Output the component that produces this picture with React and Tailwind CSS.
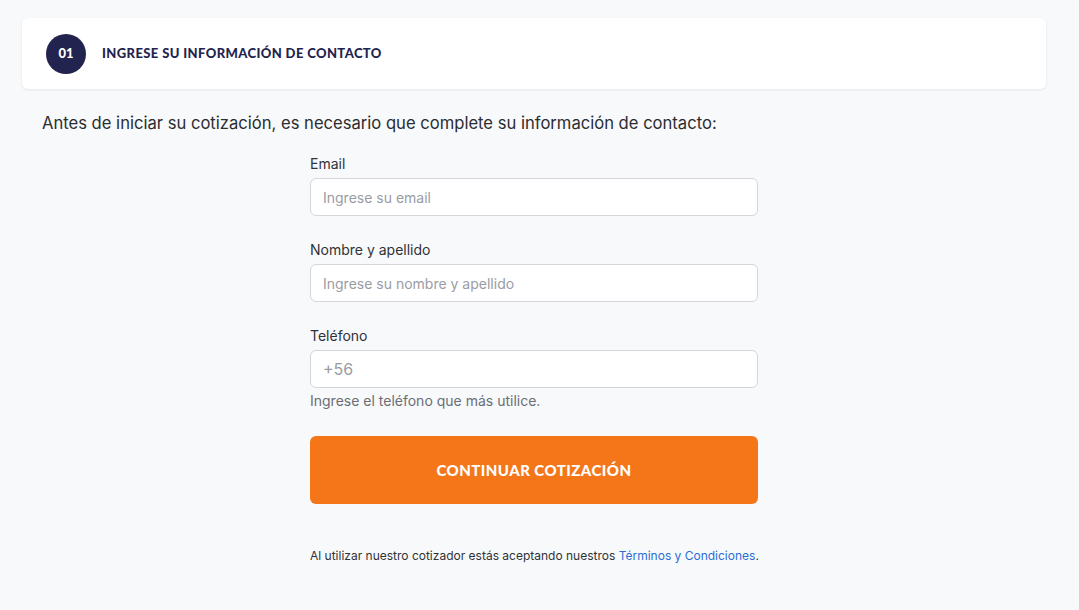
import React from "react";

const Field = ({ label, placeholder, help, big }) => (
  <div className="flex flex-col">
    <label className="text-[14px] leading-5 text-[#2f3237] mb-[4px]">{label}</label>
    <input
      type="text"
      placeholder={placeholder}
      className={`h-[38px] w-full rounded-md border border-[#d4d6da] bg-white px-3 text-[#2f3237] outline-none placeholder:text-[#9a9ca3] ${
        big ? "text-[16px]" : "text-[14px]"
      }`}
    />
    {help && <p className="mt-[3px] text-[14px] leading-5 text-[#6b6e75]">{help}</p>}
  </div>
);

const App = () => {
  return (
    <div
      className="min-h-[610px] w-full bg-[#f8f9fb] pt-[18px]"
      style={{ fontFamily: "Inter, 'Liberation Sans', sans-serif" }}
    >
      <div className="ml-[22px] w-[1024px] h-[71px] rounded-md bg-white shadow-[0_1px_3px_rgba(0,0,0,0.08)] flex items-center pl-[24px] gap-[16px]">
        <div
          className="w-[40px] h-[40px] rounded-full bg-[#23234f] text-white flex items-center justify-center text-[13px] font-black"
          style={{ fontFamily: "Lato, sans-serif" }}
        >
          01
        </div>
        <h1
          className="text-[13px] font-black uppercase tracking-[0.03em] text-[#23234f]"
          style={{ fontFamily: "Lato, sans-serif" }}
        >
          Ingrese su información de contacto
        </h1>
      </div>

      <p className="ml-[42px] mt-[22px] text-[16.6px] leading-6 text-[#2b2d31]">
        Antes de iniciar su cotización, es necesario que complete su información de contacto:
      </p>

      <div className="ml-[310px] w-[448px] mt-[19px] flex flex-col">
        <Field label="Email" placeholder="Ingrese su email" />
        <div className="mt-[24px]">
          <Field label="Nombre y apellido" placeholder="Ingrese su nombre y apellido" />
        </div>
        <div className="mt-[24px]">
          <Field label="Teléfono" placeholder="+56" help="Ingrese el teléfono que más utilice." big />
        </div>
        <button
          className="mt-[25px] h-[68px] w-full rounded-md bg-[#f47619] text-white text-[15px] font-black uppercase tracking-[0.03em]"
          style={{ fontFamily: "Lato, sans-serif" }}
        >
          Continuar cotización
        </button>
        <p className="mt-[44px] whitespace-nowrap text-[12px] leading-4 text-[#2f3237]">
          Al utilizar nuestro cotizador estás aceptando nuestros{" "}
          <a href="#" className="text-[#2c6ed5]">Términos y Condiciones</a>.
        </p>
      </div>
    </div>
  );
};

export default App;
